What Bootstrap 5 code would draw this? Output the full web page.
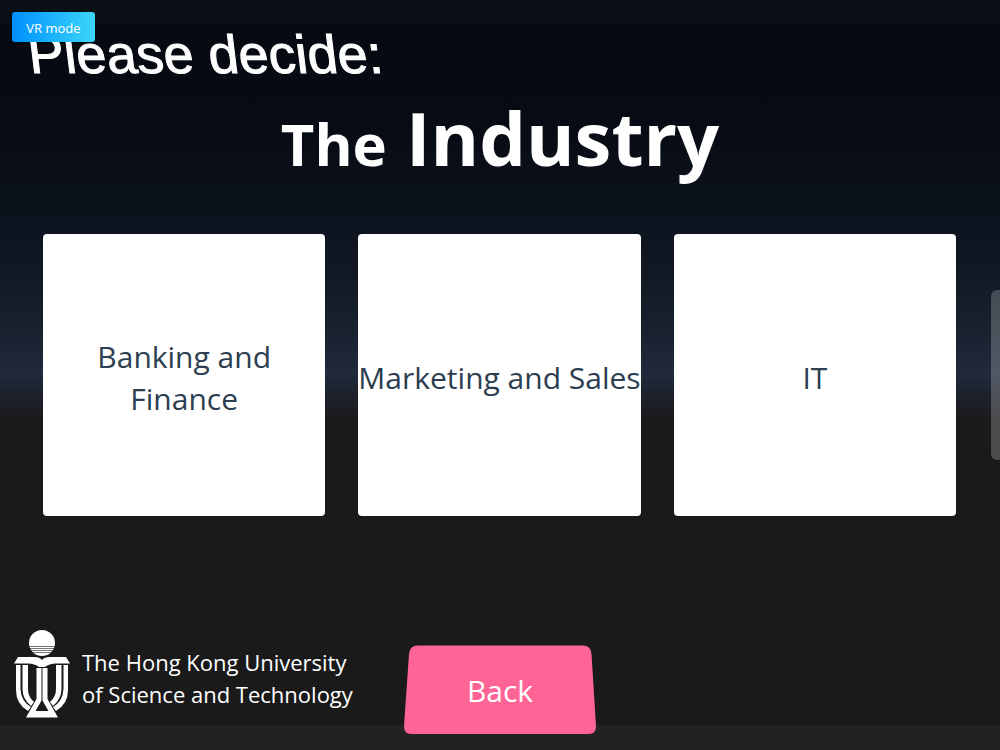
<!DOCTYPE html>
<html lang="en">
<head>
<meta charset="utf-8">
<meta name="viewport" content="width=device-width, initial-scale=1">
<title>The Industry</title>
<link href="https://cdn.jsdelivr.net/npm/bootstrap@5.3.0/dist/css/bootstrap.min.css" rel="stylesheet">
<style>
  body {
    font-family: "Open Sans", "Noto Sans", sans-serif;
    color: #fff;
    background: #1a1a1a linear-gradient(to bottom, #050910 0%, #070b13 16%, #0b111b 26%, #111823 36%, #18212e 44%, #202a3c 50%, #1d232f 52%, #1a1a1a 56%, #1a1a1a 100%) no-repeat;
  }
  .edge-top { height: 24px; background: rgba(255, 255, 255, .025); }
  .edge-bottom { height: 25px; background: #222; }
  .vr-btn {
    top: 12px; left: 12px; width: 83px; height: 30px;
    font-size: 13px; line-height: 18px; color: #fff;
    border: 0; border-radius: 3px; padding: 2px 0 0;
    background: linear-gradient(to right, #0090ff, #3bd6f8);
  }
  .prompt {
    font-family: "Liberation Sans", Arial, sans-serif;
    font-size: 54px; line-height: 60px;
    padding-left: 28px;
    transform: skewX(7deg);
    -webkit-text-stroke: 1px #fff;
  }
  .topic { font-size: 74px; line-height: 100px; font-weight: 700; margin-top: 4px; }
  .topic-lead { font-size: 58px; }
  .choices {
    display: grid; grid-template-columns: repeat(3, 1fr);
    gap: 33px; padding: 0 44px 0 43px; margin-top: 40px;
  }
  .choice {
    aspect-ratio: 1; border: 0; border-radius: 4px; padding: 6px 0 0;
    background: #fff; color: #2c3e50;
    font-size: 30px; line-height: 42px; white-space: nowrap;
  }
  .foot { display: grid; grid-template-columns: 1fr 192px 1fr; align-items: end; padding: 0 14px; }
  .brand { padding-bottom: 15px; }
  .emblem { width: 56px; height: 90px; }
  .school { font-size: 22px; line-height: 32px; white-space: nowrap; }
  .back-btn {
    height: 90px; border: 0; padding: 4px 0 0; background: none; color: #fff;
    font-size: 30px; line-height: 40px;
  }
  .side-tab {
    top: 290px; right: 0; width: 9px; height: 170px;
    background: rgba(255, 255, 255, .22); border-radius: 6px 0 0 6px;
  }
</style>
</head>
<body class="min-vh-100 d-flex flex-column position-relative overflow-x-hidden">
  <button type="button" class="vr-btn position-absolute z-3">VR mode</button>
  <div class="edge-top"></div>
  <header>
    <p class="prompt m-0">Please decide:</p>
    <h1 class="topic text-center mb-0"><span class="topic-lead">The</span> Industry</h1>
  </header>
  <main class="choices">
    <button type="button" class="choice">Banking and<br>Finance</button>
    <button type="button" class="choice">Marketing and Sales</button>
    <button type="button" class="choice">IT</button>
  </main>
  <footer class="mt-auto position-relative">
    <div class="edge-bottom position-absolute bottom-0 start-0 w-100"></div>
    <div class="foot position-relative pb-3">
      <div class="brand d-flex align-items-center">
        <svg class="emblem flex-shrink-0" viewBox="0 0 56 90" fill="#fff" aria-hidden="true">
          <circle cx="28" cy="14" r="13"/>
          <path d="M14 17.500h28M14 19.500h28M14 21.500h28M14 23.500h28" stroke="#1a1a1a" stroke-width=".6"/>
          <path d="M4 28H20Q26 28 28 31Q30 28 36 28H52L56 34.5H41Q34 35 31 38H25Q22 35 15 34.5H0Z"/>
          <path d="M2 36H6.500V60Q7 72 17 78L14 82Q2 75 2 61Z"/>
          <path d="M8.500 36H14V60Q14 68 20 73L17 77Q8.500 70 8.500 60Z"/>
          <path d="M54 36H49.500V60Q49 72 39 78L42 82Q54 75 54 61Z"/>
          <path d="M47.500 36H42V60Q42 68 36 73L39 77Q47.500 70 47.500 60Z"/>
          <path fill-rule="evenodd" d="M22.500 39H33.500V70L44 88.500H12L22.500 70ZM27.500 39V71.500L21.500 82H34.500L28.500 71.500V39Z"/>
        </svg>
        <div class="school ms-2 ps-1 pt-2">The Hong Kong University<br>of Science and Technology</div>
      </div>
      <button type="button" class="back-btn position-relative">
        <svg class="position-absolute top-0 start-0 w-100 h-100" viewBox="0 0 192 90" preserveAspectRatio="none" aria-hidden="true">
          <path fill="#ff6496" d="M14 1.500H179Q187 1.500 187.500 10L192 82Q192 90 185 90H7Q0 90 0 82L5 10Q5.500 1.500 14 1.500Z"/>
        </svg>
        <span class="position-relative">Back</span>
      </button>
    </div>
  </footer>
  <div class="side-tab position-absolute"></div>
<script src="https://cdn.jsdelivr.net/npm/bootstrap@5.3.0/dist/js/bootstrap.bundle.min.js"></script>
</body>
</html>
